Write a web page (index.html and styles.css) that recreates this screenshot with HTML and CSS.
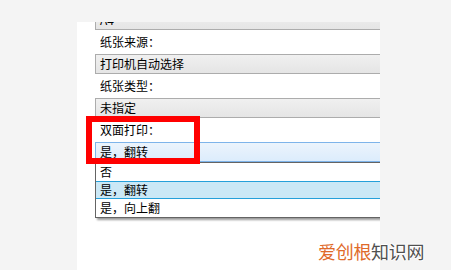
FILE: index.html
```html
<!DOCTYPE html>
<html lang="zh-CN">
<head>
    <meta charset="UTF-8">
    <title>打印设置</title>
    <link rel="stylesheet" href="styles.css">
</head>
<body>
    <div class="panel">
        <div class="form">
            <div class="combo combo-cut">A4</div>
            <div class="label">纸张来源：</div>
            <div class="combo">打印机自动选择</div>
            <div class="label">纸张类型：</div>
            <div class="combo">未指定</div>
            <div class="label">双面打印：</div>
            <div class="combo combo-open">是，翻转</div>
            <div class="dropdown">
                <div class="option">否</div>
                <div class="option option-selected">是，翻转</div>
                <div class="option">是，向上翻</div>
            </div>
        </div>
        <div class="highlight"></div>
    </div>
    <div class="watermark"><span class="wm-orange">爱创根</span><span class="wm-gray">知识网</span></div>
</body>
</html>
```

FILE: styles.css
```css
html, body {
    margin: 0;
    height: 100%;
    background-color: #f4f4f4;
    font-family: "Noto Sans CJK SC", "Noto Sans", sans-serif;
    font-size: 12px;
    color: #000;
}
body {
    overflow: hidden;
    position: relative;
}
.panel {
    position: relative;
    margin: 22px 0 0 77px;
    width: 303px;
    height: 248px;
    background-color: #fff;
    overflow: hidden;
}
.form {
    padding-left: 18px;
    width: 320px;
}
.combo {
    box-sizing: border-box;
    height: 20px;
    line-height: 18px;
    padding-left: 4px;
    border: 1px solid #acacac;
    background: linear-gradient(#f0f0f0, #e5e5e5);
}
.combo-cut {
    margin-top: -12px;
}
.combo-open {
    border-color: #7eb4ea;
    background: linear-gradient(#ecf4fc, #dcecfc);
}
.label {
    height: 24px;
    line-height: 24px;
    padding-left: 5px;
}
.dropdown {
    border: 1px solid #646464;
    background-color: #fff;
    box-shadow: 2px 2px 2px rgba(0, 0, 0, 0.4);
}
.option {
    box-sizing: border-box;
    height: 18px;
    line-height: 18px;
    padding-left: 4px;
}
.option-selected {
    border-top: 1px solid #26a0da;
    border-bottom: 1px solid #26a0da;
    line-height: 16px;
    background-color: #cbe8f6;
}
.highlight {
    position: absolute;
    left: 9px;
    top: 94px;
    width: 102px;
    height: 36px;
    border: 6px solid #ff0000;
}
.watermark {
    position: absolute;
    left: 318px;
    top: 240px;
    font-size: 18px;
    line-height: 22px;
    letter-spacing: -0.3px;
}
.wm-orange {
    color: #e06a2b;
}
.wm-gray {
    color: #505050;
    text-shadow: 1px 0 #fff, -1px 0 #fff, 0 1px #fff, 0 -1px #fff;
}
```
